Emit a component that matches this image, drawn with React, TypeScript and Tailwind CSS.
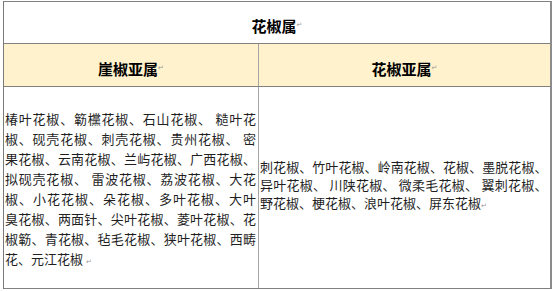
import React from "react";

const leftLines = [
  "椿叶花椒、簕欓花椒、石山花椒、 糙叶花",
  "椒、砚壳花椒、刺壳花椒、贵州花椒、 密",
  "果花椒、云南花椒、兰屿花椒、广西花椒、",
  "拟砚壳花椒、 雷波花椒、荔波花椒、大花",
  "椒、小花花椒、朵花椒、多叶花椒、大叶",
  "臭花椒、两面针、尖叶花椒、菱叶花椒、花",
  "椒簕、青花椒、毡毛花椒、狭叶花椒、西畴",
];

const rightLines = [
  "刺花椒、竹叶花椒、岭南花椒、花椒、墨脱花椒、",
  "异叶花椒、 川陕花椒、 微柔毛花椒、 翼刺花椒、",
];

const Mark = () => (
  <span className="text-[7px] text-[#9a9a9a] font-['DejaVu_Sans',sans-serif] align-baseline">↵</span>
);

export default function App() {
  return (
    <div className="w-[554px] h-[291px] bg-white pl-[3px] pt-[1px] font-['Noto_Sans_CJK_SC',sans-serif]">
      <div className="w-[549px] h-[288px] border-t border-b border-l border-r-2 border-t-[#808080] border-b-[#808080] border-l-[#7a7a7a] border-r-[#8c8c8c] flex flex-col">
        <div className="h-[42px] shrink-0 border-b border-[#808080] flex items-center justify-center pt-[6px]">
          <span className="text-[15px] font-bold text-black leading-none">花椒属</span>
          <Mark />
        </div>
        <div className="h-[43px] shrink-0 border-b border-[#808080] bg-[#fff2cc] flex">
          <div className="w-[255px] border-r border-[#a6a6a6] flex items-center justify-center pt-[7px]">
            <span className="text-[15px] font-bold text-black leading-none">崖椒亚属</span>
            <Mark />
          </div>
          <div className="flex-1 flex items-center justify-center pt-[7px]">
            <span className="text-[15px] font-bold text-black leading-none">花椒亚属</span>
            <Mark />
          </div>
        </div>
        <div className="flex-1 flex text-[13px] text-[#1f1f1f]">
          <div className="w-[255px] border-r border-[#a6a6a6] pl-[1px] pr-[2px] pt-[22px] leading-[20px]">
            {leftLines.map((line) => (
              <div key={line} className="whitespace-nowrap text-justify [text-align-last:justify]">
                {line}
              </div>
            ))}
            <div className="whitespace-nowrap">
              花、元江花椒 <Mark />
            </div>
          </div>
          <div className="flex-1 pl-[1px] pr-[3px] pt-[71px] leading-[18px] tracking-[-0.5px]">
            {rightLines.map((line) => (
              <div key={line} className="whitespace-nowrap text-justify [text-align-last:justify]">
                {line}
              </div>
            ))}
            <div className="whitespace-nowrap tracking-normal">
              野花椒、梗花椒、浪叶花椒、屏东花椒<Mark />
            </div>
          </div>
        </div>
      </div>
    </div>
  );
}
